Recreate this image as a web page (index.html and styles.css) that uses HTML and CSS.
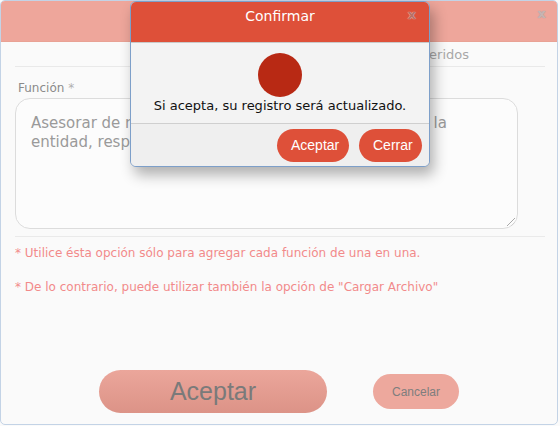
FILE: index.html
```html
<!DOCTYPE html>
<html>
<head>
<meta charset="utf-8">
<link rel="stylesheet" href="styles.css">
</head>
<body>
<div class="dialog">
  <div class="dialog-header">
    <span class="close-x">x</span>
  </div>
  <div class="dialog-body">
    <div class="tabs"><span class="tab">Conocimientos Requeridos</span></div>
    <label class="field-label">Función <span class="req">*</span></label>
    <div class="textarea">Asesorar de manera oportuna a las dependencias de la entidad, respecto a temas de su área.
      <span class="grip"></span>
    </div>
    <div class="notes">
      <p class="note">* Utilice ésta opción sólo para agregar cada función de una en una.</p>
      <p class="note">* De lo contrario, puede utilizar también la opción de "Cargar Archivo"</p>
    </div>
    <div class="actions">
      <button class="btn-big">Aceptar</button>
      <button class="btn-small">Cancelar</button>
    </div>
  </div>
</div>

<div class="modal">
  <div class="modal-header">
    <span class="modal-title">Confirmar</span>
    <span class="close-x modal-close">x</span>
  </div>
  <div class="modal-body">
    <div class="dot"></div>
    <p class="modal-text">Si acepta, su registro será actualizado.</p>
  </div>
  <div class="modal-footer">
    <button class="btn-red">Aceptar</button>
    <button class="btn-red">Cerrar</button>
  </div>
</div>
</body>
</html>
```

FILE: styles.css
```css
html, body {
  margin: 0;
  padding: 0;
  background: #fafafa;
}
body {
  width: 560px;
  height: 426px;
  overflow: hidden;
  position: relative;
  font-family: "DejaVu Sans", Verdana, sans-serif;
}
.dialog {
  width: 556px;
  height: 423px;
  border: 1px solid #c3d3e6;
  border-radius: 5px;
  background: #fafafa;
  overflow: hidden;
}
.dialog-header {
  height: 40px;
  background: #eea69b;
  border-bottom: 1px solid #e9a295;
  position: relative;
}
.close-x {
  position: absolute;
  top: 5px;
  right: 11px;
  font-family: "DejaVu Sans", sans-serif;
  font-weight: bold;
  font-size: 13px;
  color: #c8b4b2;
  text-shadow: 0 0 1px #999;
}
.dialog-body {
  padding: 0 12px 0 14px;
}
.tabs {
  height: 23px;
  border-bottom: 1px solid #e9e9e9;
  margin-top: 1px;
  display: flex;
  justify-content: flex-end;
  align-items: center;
  padding-right: 76px;
}
.tab {
  font-size: 13px;
  color: #a8a8a8;
}
.field-label {
  display: block;
  margin: 13px 0 0 3px;
  font-size: 12px;
  line-height: 16px;
  color: #8a8a8a;
}
.req {
  color: #b0b0b0;
}
.textarea {
  position: relative;
  box-sizing: border-box;
  margin-top: 2px;
  width: 503px;
  height: 131px;
  border: 1px solid #dcdcdc;
  border-radius: 15px;
  background: #fcfcfc;
  padding: 15px 60px 0 15px;
  font-size: 15px;
  line-height: 19px;
  color: #9a9a9a;
  overflow: hidden;
}
.grip {
  position: absolute;
  right: 2px;
  bottom: 2px;
  width: 8px;
  height: 8px;
  background: linear-gradient(135deg, transparent 45%, #aaa 45%, #aaa 52%, transparent 52%, transparent 72%, #aaa 72%, #aaa 80%, transparent 80%);
}
.notes {
  margin-top: 7px;
  width: 530px;
  border-top: 1px solid #eaeaea;
  padding-top: 8px;
}
.note {
  margin: 0 0 18px 0;
  font-size: 12px;
  line-height: 16px;
  color: #f28a8a;
}
.actions {
  display: flex;
  align-items: center;
  margin-top: 75px;
  padding-left: 84px;
}
.btn-big {
  width: 228px;
  height: 43px;
  border: none;
  border-radius: 22px;
  background: linear-gradient(#eba69b, #dc9387);
  color: #7a7a7a;
  font-family: "Liberation Sans", Arial, sans-serif;
  font-size: 25px;
  padding: 0;
}
.btn-small {
  margin-left: 46px;
  width: 86px;
  height: 35px;
  border: none;
  border-radius: 18px;
  background: #eda89d;
  color: #7e7e7e;
  font-family: "Liberation Sans", Arial, sans-serif;
  font-size: 12px;
  padding: 0;
}

/* confirm modal overlay */
.modal {
  position: absolute;
  left: 130px;
  top: 1px;
  width: 298px;
  height: 164px;
  border: 1px solid #7d9fc9;
  border-radius: 6px;
  background: #f3f3f3;
  box-shadow: 4px 8px 14px rgba(0, 0, 0, 0.3);
  overflow: hidden;
  display: flex;
  flex-direction: column;
}
.modal-header {
  position: relative;
  height: 40px;
  background: #de5039;
  border-bottom: 1px solid #c9c9c9;
  display: flex;
  align-items: center;
  justify-content: center;
}
.modal-title {
  color: #ffffff;
  font-size: 14px;
  margin-top: -12px;
}
.modal-close {
  top: 5px;
  right: 13px;
  color: #b77064;
  text-shadow: 0 0 1px #fff;
}
.modal-body {
  height: 80px;
  border-bottom: 1px solid #cfcfcf;
  display: flex;
  flex-direction: column;
  align-items: center;
}
.dot {
  margin-top: 10px;
  width: 44px;
  height: 44px;
  border-radius: 50%;
  background: #b82914;
}
.modal-text {
  margin: 1px 0 0 0;
  font-size: 13px;
  line-height: 16px;
  color: #111;
}
.modal-footer {
  flex: 1;
  background: #efefef;
  display: flex;
  justify-content: flex-end;
  align-items: center;
  gap: 10px;
  padding-right: 7px;
}
.btn-red {
  height: 33px;
  border: none;
  border-radius: 17px;
  background: #de5039;
  color: #fff;
  font-family: "Liberation Sans", Arial, sans-serif;
  font-size: 14px;
  padding: 0 14px;
}
.btn-red:first-child {
  width: 72px;
}
.btn-red:last-child {
  width: 63px;
}
```
